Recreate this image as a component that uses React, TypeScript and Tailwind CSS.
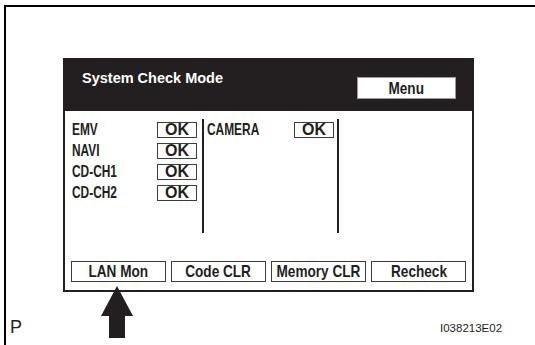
const rows = ['EMV', 'NAVI', 'CD-CH1', 'CD-CH2'];
const buttons = ['LAN Mon', 'Code CLR', 'Memory CLR', 'Recheck'];

function OkBox() {
  return (
    <div className="w-[40px] h-[16px] border-[1.5px] border-[#3d3b3c] flex items-center justify-center text-[16px] font-bold leading-none text-[#231f20]">
      OK
    </div>
  );
}

function Label({ text, width }: { text: string; width: string }) {
  return (
    <div className={`${width} whitespace-nowrap`}>
      <span className="inline-block origin-left scale-x-[0.7] text-[17px] font-bold leading-none text-[#231f20]">
        {text}
      </span>
    </div>
  );
}

export default function App() {
  return (
    <div className="relative w-[535px] h-[345px] overflow-hidden bg-white font-['Liberation_Sans',Arial,sans-serif]">
      {/* frame: only left and top edges fit in the shot */}
      <div className="ml-[4px] mt-[5px] w-[600px] h-[400px] border-l-2 border-t-2 border-black">
        <div className="ml-[57px] mt-[51px] w-[411px]">
          {/* header */}
          <div className="h-[53px] bg-[#231f20] flex items-start justify-between pl-[19px] pr-[18px]">
            <span className="pt-[13px] text-[14.5px] font-bold leading-none text-white">System Check Mode</span>
            <div className="mt-[19px] w-[99px] h-[22px] bg-white border border-[#9a9a9a] flex items-center justify-center">
              <span className="inline-block scale-x-[0.8] text-[17px] font-bold leading-none text-[#231f20]">Menu</span>
            </div>
          </div>

          {/* body */}
          <div className="border-x-2 border-b-2 border-[#231f20] bg-white pt-[8px] pb-[8px]">
            <div className="flex h-[114px]">
              <div className="pl-[7px] flex flex-col">
                {rows.map((r) => (
                  <div key={r} className="flex items-center h-[21px]">
                    <Label text={r} width="w-[85px]" />
                    <OkBox />
                  </div>
                ))}
              </div>
              <div className="ml-[5px] w-[2px] bg-[#231f20]" />
              <div className="ml-[3px] flex flex-col">
                <div className="flex items-center h-[21px]">
                  <Label text="CAMERA" width="w-[87px]" />
                  <OkBox />
                </div>
              </div>
              <div className="ml-[3px] w-[2px] bg-[#231f20]" />
            </div>

            <div className="mt-[28px] pl-[6px] flex gap-[5px]">
              {buttons.map((b) => (
                <div
                  key={b}
                  className="w-[95px] h-[21px] border-[1.5px] border-[#3d3b3c] flex items-center justify-center whitespace-nowrap"
                >
                  <span className="inline-block scale-x-[0.8] text-[17px] font-bold leading-none text-[#231f20]">{b}</span>
                </div>
              ))}
            </div>
          </div>
        </div>

        <div className="w-[529px] mt-[26px] flex items-end pl-[4px]">
          <span className="text-[18px] leading-none text-[#231f20]">P</span>
          <span className="ml-[418px] mb-[2px] text-[11.5px] leading-none text-[#231f20]">I038213E02</span>
        </div>
      </div>

      {/* pointer arrow at LAN Mon */}
      <svg className="absolute left-[100px] top-[286px]" width="34" height="53" viewBox="0 0 34 53">
        <polygon points="17,0 33,30 25,30 25,52 9,52 9,30 1,30" fill="#231f20" />
      </svg>
    </div>
  );
}
